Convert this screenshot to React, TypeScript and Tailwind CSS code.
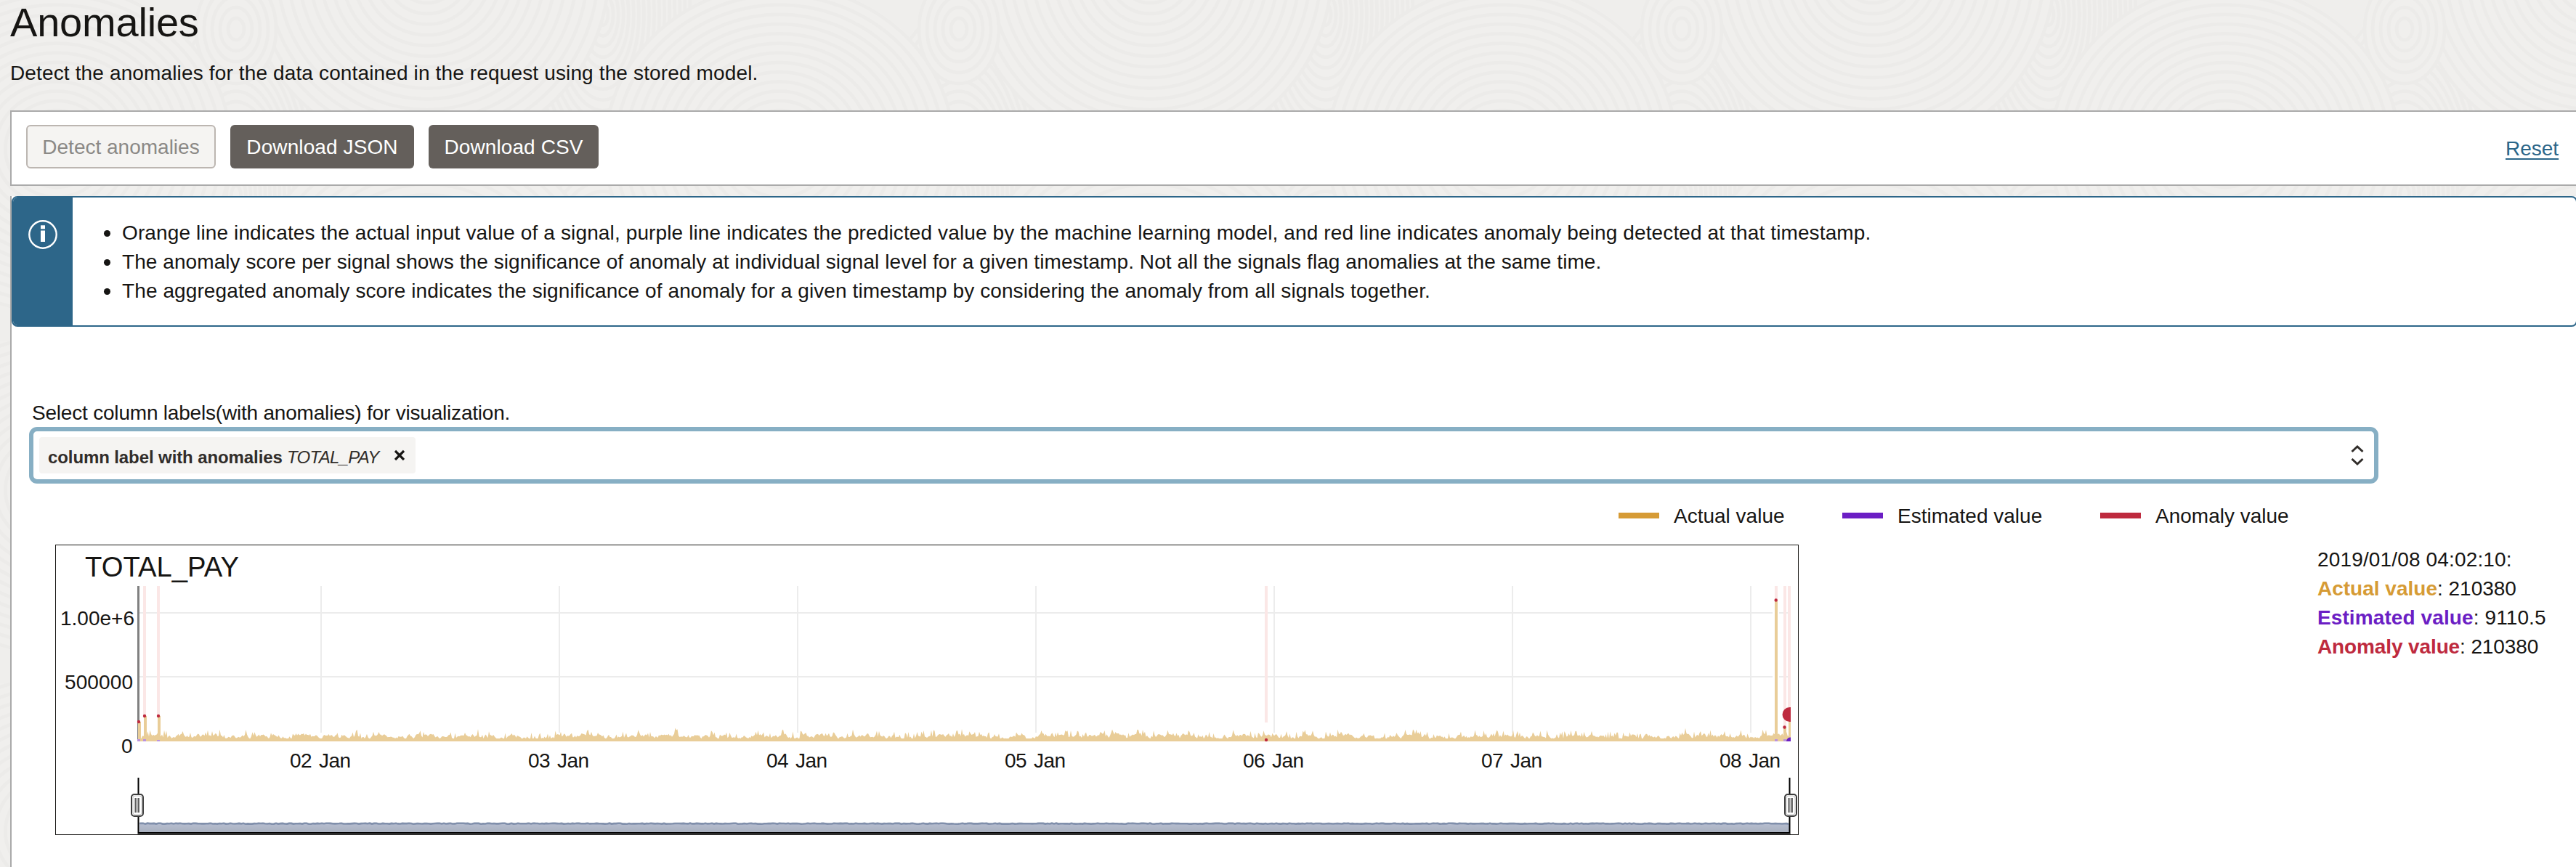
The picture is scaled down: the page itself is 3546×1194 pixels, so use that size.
import React from "react";

type Pt = [number, number];

function makeNoise(seed: number) {
  let s = seed;
  return () => {
    s = (s * 1664525 + 1013904223) % 4294967296;
    return s / 4294967296;
  };
}

const BASE = 281;
const PLOT_W = 2274;
// Spikes standing out of the regular signal: left, width, top
const SPIKES = [
  [0, 4, 254],
  [8, 4, 246],
  [27, 4, 246],
  [2253, 4, 87],
  [2265, 4, 262],
  [2272, 3, 245],
];

function signalPath() {
  const rnd = makeNoise(42);
  const pts: Pt[] = [];
  let level = 7;
  for (let x = 0; x <= PLOT_W; x += 1.5) {
    level += (rnd() - 0.5) * 5 + (7 - level) * 0.3;
    level = Math.max(4, Math.min(11, level));
    const burst = rnd() < 0.2 ? 2 + rnd() * 6 : 0;
    pts.push([x, BASE - level - burst]);
  }
  return `M0 ${BASE} ` + pts.map(([x, y]) => `L${x} ${y.toFixed(1)}`).join(" ") + ` L${PLOT_W} ${BASE} Z`;
}

function rangeLine() {
  const rnd = makeNoise(9);
  let d = "M192 1134";
  for (let x = 194; x <= 2463; x += 3) d += ` L${x} ${(1133.7 + rnd() * 1).toFixed(1)}`;
  return d;
}

// One family of concentric rings, drawn from the outside in over an opaque base
function Rings({ cx, cy, rx, ry, step }: { cx: number; cy: number; rx: number; ry: number; step: number }) {
  const n = Math.floor(Math.max(rx, ry) / step);
  return (
    <>
      {Array.from({ length: n }, (_, i) => {
        const k = (n - i) / n;
        return <ellipse key={i} cx={cx} cy={cy} rx={rx * k} ry={ry * k} />;
      })}
    </>
  );
}

function Contours() {
  return (
    <svg className="absolute inset-0 h-full w-full" aria-hidden="true">
      <defs>
        <pattern id="contour" width="995" height="470" patternUnits="userSpaceOnUse">
          <g fill="#f0efed" stroke="#ecebe9" strokeWidth="4.5">
            <Rings cx={325} cy={270} rx={120} ry={260} step={14} />
            <Rings cx={830} cy={20} rx={120} ry={250} step={14} />
            <Rings cx={830} cy={440} rx={120} ry={250} step={14} />
            <Rings cx={588} cy={-40} rx={250} ry={250} step={14} />
            <Rings cx={588} cy={430} rx={250} ry={250} step={14} />
            <Rings cx={78} cy={205} rx={240} ry={225} step={14} />
            <Rings cx={1073} cy={205} rx={240} ry={225} step={14} />
            <Rings cx={325} cy={40} rx={55} ry={75} step={13} />
          </g>
        </pattern>
      </defs>
      <rect width="100%" height="100%" fill="url(#contour)" />
    </svg>
  );
}

function Handle({ x }: { x: number }) {
  return (
    <g transform={`translate(${x} 1093)`}>
      <rect x="1" y="1" width="16" height="30" rx="4" fill="#fff" stroke="#3c3c3c" strokeWidth="2" />
      <rect x="3" y="3" width="12" height="26" rx="3" fill="none" stroke="#c4c4c4" strokeWidth="1" />
      <rect x="5.5" y="6" width="2.2" height="20" fill="#5c5c5c" />
      <rect x="7.7" y="6" width="2" height="20" fill="#c4c4c4" />
      <rect x="9.7" y="6" width="2.2" height="20" fill="#5c5c5c" />
    </g>
  );
}

const DAYS = [
  ["02 Jan", 442],
  ["03 Jan", 770],
  ["04 Jan", 1098],
  ["05 Jan", 1426],
  ["06 Jan", 1754],
  ["07 Jan", 2082],
  ["08 Jan", 2410],
] as const;

function Chart() {
  return (
    <svg
      className="block"
      width="2401"
      height="400"
      viewBox="76 750 2401 400"
      fontFamily="'Liberation Sans', Arial, sans-serif"
      fontSize="28"
      fill="#161513"
    >
      <rect x="76.5" y="750.5" width="2399" height="399" fill="#fff" stroke="#161513" />
      <text x="117" y="794" fontSize="39.5" textLength="212" lengthAdjust="spacingAndGlyphs">TOTAL_PAY</text>
      <g fill="#ececec">
        <rect x="190" y="843" width="2275" height="2" />
        <rect x="190" y="931" width="2275" height="2" />
        {DAYS.map(([d, x]) => (
          <rect key={d} x={x - 1} y="807" width="2" height="202" />
        ))}
      </g>
      <rect x="189" y="807" width="3" height="214" fill="#808080" />
      <g fill="#fbe7e6">
        <rect x="197" y="807" width="4" height="179" />
        <rect x="216" y="807" width="4" height="179" />
        <rect x="1741" y="807" width="4" height="188" />
        <rect x="2443" y="807" width="4" height="20" />
        <rect x="2455" y="807" width="4" height="195" />
        <rect x="2461" y="807" width="4" height="180" />
      </g>
      <rect x="2440" y="827" width="9" height="190" fill="#fff" />
      <g transform="translate(190 740)" fill="#e9cd98">
        <path d={signalPath()} />
        {SPIKES.map(([x, w, y]) => (
          <rect key={x} x={x} y={y} width={w} height={BASE - y} />
        ))}
      </g>
      <g fill="#be2a3e">
        <circle cx="191" cy="994" r="2.2" />
        <circle cx="199" cy="986" r="2.2" />
        <circle cx="218" cy="986" r="2.2" />
        <circle cx="1743" cy="1019" r="2.2" />
        <circle cx="2444.7" cy="826.5" r="2.2" />
        <circle cx="2456.5" cy="1001.5" r="2.2" />
        <path d="M2465 974 h-1.5 a10 10 0 0 0 0 20 h1.5 Z" />
      </g>
      <g fill="#bb93dc">
        <rect x="189" y="1018" width="4" height="3" />
        <rect x="197" y="1018" width="4" height="3" />
        <rect x="216" y="1019" width="4" height="2" />
        <rect x="2443" y="1018" width="4" height="3" />
        <rect x="2455" y="1018" width="4" height="3" />
      </g>
      <path d="M2459 1021 a5.5 5.5 0 0 1 6 -5.5 v5.5 Z" fill="#6b1ec4" />
      <text x="83" y="861" textLength="102">1.00e+6</text>
      <text x="89" y="949" textLength="94">500000</text>
      <text x="167" y="1037">0</text>
      {DAYS.map(([d, x]) => (
        <text key={d} x={x - 43} y="1057" textLength="84" wordSpacing="3">{d}</text>
      ))}
      <linearGradient id="range" x1="0" y1="0" x2="0" y2="1">
        <stop offset="0" stopColor="#b6bdd0" />
        <stop offset="1" stopColor="#a9b1bf" />
      </linearGradient>
      <rect x="192" y="1134" width="2271" height="12" fill="url(#range)" />
      <path d={rangeLine()} fill="none" stroke="#808fab" strokeWidth="2.6" />
      <path d="M190.5 1071 V1147 H2463.5 V1071" fill="none" stroke="#000" strokeWidth="2" />
      <path d="M189.5 1148.5 H2465" stroke="#777" strokeWidth="1" />
      <Handle x={180} />
      <Handle x={2456} />
    </svg>
  );
}

function LegendItem({ swatch, label, width }: { swatch: string; label: string; width: string }) {
  return (
    <div className={`flex items-center ${width}`}>
      <span className={`mr-5 h-2 w-14 ${swatch}`} />
      <span className="pt-px">{label}</span>
    </div>
  );
}

function Note({ tracking, children }: { tracking: string; children: React.ReactNode }) {
  return (
    <li className="flex items-center">
      <span className="mr-4 size-[9px] rounded-full bg-[#161513]" />
      <span className={tracking}>{children}</span>
    </li>
  );
}

export default function App() {
  return (
    <div className="relative flex h-[1194px] w-[3546px] flex-col overflow-hidden bg-[#efeeec] font-['Liberation_Sans',Arial,sans-serif] text-[28px] leading-[40px] text-[#161513]">
      <Contours />
      <header className="relative h-[152px] pl-[14px]">
        <h1 className="h-[81px] pt-[3px] text-[56px] leading-[56px] tracking-[-0.2px]">Anomalies</h1>
        <p className="whitespace-nowrap tracking-[0.14px]">Detect the anomalies for the data contained in the request using the stored model.</p>
      </header>
      <section className="relative ml-[14px] flex h-[104px] w-[3540px] items-center border-2 border-[#aaa] bg-white pb-[4px] pl-[20px]">
        <button className="h-[60px] w-[261px] rounded-[6px] border-2 border-[#bcb6b1] bg-[#f5f4f2] pt-[2px] text-[#8b8986]">Detect anomalies</button>
        <button className="ml-5 h-[60px] w-[253px] rounded-[6px] bg-[#645f5b] pt-[2px] tracking-[0.1px] text-white">Download JSON</button>
        <button className="ml-5 h-[60px] w-[234px] rounded-[6px] bg-[#645f5b] pt-[2px] tracking-[0.1px] text-white">Download CSV</button>
        <a className="mt-[6px] ml-[2625px] text-[#2b6689] underline decoration-2 underline-offset-4">Reset</a>
      </section>
      <main className="relative mt-[14px] ml-[14px] flex h-[924px] flex-col border-l-2 border-[#aaa] bg-white">
        <div className="flex h-[180px] w-[3532px] overflow-hidden rounded-[8px] border-2 border-[#2d6689]">
          <div className="w-[82px] shrink-0 bg-[#2d6689] pt-[31px] pl-[21px]">
            <svg width="40" height="40" viewBox="0 0 40 40" fill="none">
              <circle cx="20" cy="20" r="18.7" stroke="#fff" strokeWidth="2.4" />
              <rect x="17" y="7.3" width="6" height="5" fill="#fff" />
              <rect x="17" y="14.5" width="6" height="15.5" fill="#fff" />
            </svg>
          </div>
          <ul className="pt-[29px] pl-[43px] whitespace-nowrap">
            <Note tracking="tracking-[0.125px]">Orange line indicates the actual input value of a signal, purple line indicates the predicted value by the machine learning model, and red line indicates anomaly being detected at that timestamp.</Note>
            <Note tracking="tracking-[0.07px]">The anomaly score per signal shows the significance of anomaly at individual signal level for a given timestamp. Not all the signals flag anomalies at the same time.</Note>
            <Note tracking="tracking-[0.1px]">The aggregated anomaly score indicates the significance of anomaly for a given timestamp by considering the anomaly from all signals together.</Note>
          </ul>
        </div>
        <label className="mt-[99px] ml-[28px] h-[39px] tracking-[-0.2px]">Select column labels(with anomalies) for visualization.</label>
        <div className="ml-[24px] flex h-[78px] w-[3234px] items-center justify-between rounded-[11px] border-[6px] border-[#87afc4] pr-[14px] pl-[8px]">
          <div className="flex h-[50px] w-[518px] items-center rounded-[4px] bg-[#f5f4f2] pt-[6px] pl-[12px] text-[24px] whitespace-nowrap text-[#312d2a]">
            <b className="w-[322px] tracking-[-0.1px]">column label with anomalies</b>
            <i className="ml-[7px] w-[133px] tracking-[-0.7px]">TOTAL_PAY</i>
            <svg className="mb-[6px] ml-[15px]" width="14" height="16" viewBox="0 0 14 16" stroke="#161513" strokeWidth="3.2">
              <path d="M1 2 L13 14 M13 2 L1 14" />
            </svg>
          </div>
          <svg width="18" height="30" viewBox="0 0 18 30" fill="none" stroke="#312d2a" strokeWidth="3">
            <path d="M1.5 10 L9 3 L16.5 10 M1.5 20 L9 27 L16.5 20" />
          </svg>
        </div>
        <div className="mt-[24px] ml-[2212px] flex h-[40px] whitespace-nowrap">
          <LegendItem swatch="bg-[#d69b35]" label="Actual value" width="w-[308px]" />
          <LegendItem swatch="bg-[#6b1ec4]" label="Estimated value" width="w-[355px]" />
          <LegendItem swatch="bg-[#be2a3e]" label="Anomaly value" width="w-[300px]" />
        </div>
        <div className="mt-[20px] ml-[60px] flex">
          <Chart />
          <div className="ml-[713px] pt-px whitespace-nowrap">
            <p className="tracking-[0.15px]">2019/01/08 04:02:10:</p>
            <p><b className="text-[#d69b35]">Actual value</b>: 210380</p>
            <p className="tracking-[0.1px]"><b className="text-[#6b1ec4]">Estimated value</b>: 9110.5</p>
            <p className="tracking-[-0.12px]"><b className="text-[#be2a3e]">Anomaly value</b>: 210380</p>
          </div>
        </div>
      </main>
    </div>
  );
}
